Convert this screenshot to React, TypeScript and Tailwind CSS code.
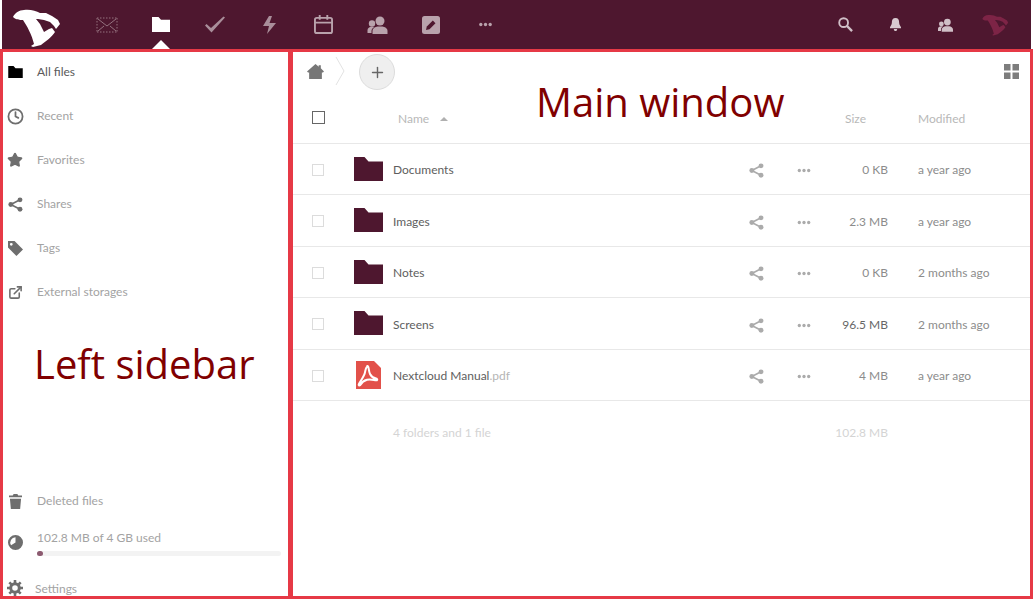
import type { ReactNode } from "react";
import { Plus, Clock, Star, ExternalLink } from "lucide-react";

const FILES = [
  { name: "Documents", size: "0 KB", modified: "a year ago", dark: false },
  { name: "Images", size: "2.3 MB", modified: "a year ago", dark: false },
  { name: "Notes", size: "0 KB", modified: "2 months ago", dark: false },
  { name: "Screens", size: "96.5 MB", modified: "2 months ago", dark: true },
];

function ShareIcon({ className }: { className?: string }) {
  return (
    <svg viewBox="0 0 16 16" className={className} fill="currentColor">
      <circle cx="12.8" cy="3" r="2.6" />
      <circle cx="3" cy="8" r="2.6" />
      <circle cx="12.8" cy="13" r="2.6" />
      <path d="M3 8 12.8 3M3 8l9.800 5" stroke="currentColor" strokeWidth="1.7" fill="none" />
    </svg>
  );
}

function Dots({ className }: { className?: string }) {
  return (
    <svg viewBox="0 0 16 6" className={className} fill="currentColor">
      <circle cx="2.4" cy="3" r="2" />
      <circle cx="8" cy="3" r="2" />
      <circle cx="13.6" cy="3" r="2" />
    </svg>
  );
}

function FolderShape({ className }: { className?: string }) {
  return (
    <svg viewBox="0 0 29 24" className={className} fill="currentColor">
      <path d="M0 0h10.500l4 4.500H29V24H0z" />
    </svg>
  );
}

function Logo({ className }: { className?: string }) {
  return (
    <svg viewBox="12 8 50 40" className={className} fill="currentColor">
      <path d="M13 17C15 13 19 10 24 10 30 9 36 11 40 13L46 13 52 16 58 20 60 24 56 29 54 26 50 22 44 20 38 19 36 19 40 24 44 32 49 29 52 28 55 32C52 37 46 41 41 45L33 47 31 46 34 44C32 35 27 26 23 20 20 20 16 20 13 17Z" />
    </svg>
  );
}

function PdfIcon({ className }: { className?: string }) {
  return (
    <svg viewBox="0 0 25 28" className={className}>
      <path d="M0 0h18l7 7v21H0z" fill="#e2514a" />
      <path d="M11.500 5c1.500 0 1 5 2.500 8 1.500 3 3 4 6 4.500 2 .5 1.500 2.300-1 1.700-3-.7-5-1.300-8-.5-3 .8-5 2-6.500 5-1 1.500-2.500.5-1.500-1 2-3 4-6 5.500-9.500 1-3 1-7.500 3-7.500z" fill="none" stroke="#fff" strokeWidth="2" />
    </svg>
  );
}

function PeopleIcon({ className }: { className?: string }) {
  return (
    <svg viewBox="0 0 20 18" className={className} fill="currentColor">
      <circle cx="12.500" cy="5" r="4.500" />
      <path d="M5 18v-3c0-3 3-4 5-4.500h5c2 .5 5 1.500 5 4.500v3z" />
      <circle cx="4.500" cy="7.500" r="3.200" />
      <path d="M0 17v-3c0-2 2-3 4-3.300l3 .3c-2 1-3 2-3 4v2z" />
    </svg>
  );
}

function GearIcon({ className }: { className?: string }) {
  return (
    <svg viewBox="0 0 16 16" className={className} fill="none" stroke="currentColor">
      <circle cx="8" cy="8" r="4.300" strokeWidth="3" />
      <path d="M8 0v3M8 13v3M0 8h3M13 8h3M2.300 2.300l2.100 2.100M11.600 11.600l2.100 2.100M13.700 2.300l-2.100 2.100M4.400 11.600l-2.100 2.100" strokeWidth="2.600" />
    </svg>
  );
}

function NavIcon({ children }: { children: ReactNode }) {
  return <div className="relative flex h-full w-[54px] items-center justify-center">{children}</div>;
}

function SideItem({ icon, label, active }: { icon: ReactNode; label: string; active?: boolean }) {
  return (
    <div className="flex h-[44px] items-center">
      <div className={`flex w-[24px] justify-center ${active ? "text-black" : "text-[#6e6e6e]"}`}>{icon}</div>
      <span className={`ml-[10px] text-[12px] ${active ? "text-[#5a5a5a]" : "text-[#a3a3a3]"}`}>{label}</span>
    </div>
  );
}

function Row({ icon, name, ext, size, modified, dark }: { icon: ReactNode; name: string; ext?: string; size: string; modified: string; dark?: boolean }) {
  return (
    <div className="flex h-[51.5px] items-center border-b border-[#e8e8e8] text-[12px]">
      <div className="flex w-[50px] justify-center pt-[2px]">
        <div className="h-[12px] w-[12px] border border-[#dcdcdc]" />
      </div>
      <div className="flex w-[40px] justify-end">{icon}</div>
      <div className="ml-[10px] w-[340px] pt-[3px] text-[#5e5e5e]">
        {name}
        {ext && <span className="text-[#b5b5b5]">{ext}</span>}
      </div>
      <div className="flex w-[47px] justify-center pt-[4px] text-[#ababab]"><ShareIcon className="h-[15px] w-[15px]" /></div>
      <div className="flex w-[47px] justify-center pt-[4px] text-[#ababab]"><Dots className="h-[5px] w-[14px]" /></div>
      <div className={`w-[61px] pt-[3px] text-right ${dark ? "text-[#666666]" : "text-[#8c8c8c]"}`}>{size}</div>
      <div className="ml-[30px] pt-[3px] text-[#8c8c8c]">{modified}</div>
    </div>
  );
}

export default function App() {
  return (
    <div className="flex h-[600px] w-[1033px] flex-col overflow-hidden bg-white font-['Lato',sans-serif]">
      {/* top bar */}
      <header className="mx-[2px] flex h-[49px] shrink-0 items-center bg-[#4e172f]">
        <div className="flex h-full w-[78px] items-start pl-[10px] pt-[8px] text-white">
          <Logo className="h-[40px] w-[50px]" />
        </div>
        <NavIcon>
          <svg viewBox="0 0 22 16" className="h-[16px] w-[22px] text-[#94727f]" fill="none" stroke="currentColor">
            <path d="M1 1h20M1 15h20M1 1v14M21 1v14" strokeDasharray="1.500 1.500" />
            <path d="M2 2l9 7 9-7M2 14l6-5M20 14l-6-5" />
          </svg>
        </NavIcon>
        <NavIcon>
          <FolderShape className="h-[15px] w-[18px] text-white" />
          <div className="absolute bottom-0 left-1/2 h-0 w-0 -translate-x-1/2 border-x-[9px] border-b-[9px] border-x-transparent border-b-white" />
        </NavIcon>
        <NavIcon>
          <svg viewBox="0 0 20 16" className="h-[17px] w-[20px] text-[#a98e9a]" fill="currentColor">
            <path d="M0 9l1.500-1.500L6 11.500 18.500 0 20 1 6.500 16z" />
          </svg>
        </NavIcon>
        <NavIcon>
          <svg viewBox="0 0 14 18" className="h-[18px] w-[14px] text-[#a98e9a]" fill="currentColor">
            <path d="M7 0h3L7.500 7H14L5 18l2-8H1z" />
          </svg>
        </NavIcon>
        <NavIcon>
          <svg viewBox="0 0 20 20" className="h-[19px] w-[19px] text-[#b9a2ac]" fill="none" stroke="currentColor" strokeWidth="2">
            <rect x="1" y="3" width="18" height="16" rx="2" />
            <path d="M1 8h18M6 0v5M14 0v5" />
          </svg>
        </NavIcon>
        <NavIcon><PeopleIcon className="h-[18px] w-[21px] text-[#b9a2ac]" /></NavIcon>
        <NavIcon>
          <svg viewBox="0 0 18 18" className="h-[18px] w-[18px]">
            <rect width="18" height="18" rx="2.500" fill="#b9a2ac" />
            <path d="M4 14l.8-3.500 6-6 2.700 2.700-6 6z" fill="#4e172f" />
          </svg>
        </NavIcon>
        <NavIcon><Dots className="h-[5px] w-[15px] text-[#b9a2ac]" /></NavIcon>
        <div className="ml-auto flex h-full items-center pr-[11px]">
          <div className="flex w-[50px] justify-center">
            <svg viewBox="0 0 16 16" className="h-[15px] w-[15px] text-[#d0bfc7]" fill="none" stroke="currentColor">
              <circle cx="6" cy="6" r="4.700" strokeWidth="2" />
              <path d="M9.500 9.500 15 15" strokeWidth="2.500" />
            </svg>
          </div>
          <div className="flex w-[50px] justify-center">
            <svg viewBox="0 0 12 14" className="h-[13px] w-[11px] text-[#d8cad0]" fill="currentColor">
              <path d="M6 0c3 0 4 2 4 5 0 2 1 3 2 5v1H0v-1c1-2 2-3 2-5 0-3 1-5 4-5zM4 12h4l-1 2H5z" />
            </svg>
          </div>
          <div className="flex w-[50px] justify-center"><PeopleIcon className="h-[14px] w-[15px] text-[#d0bfc7]" /></div>
          <div className="flex w-[50px] justify-center"><Logo className="h-[22px] w-[31px] text-[#7d2446]" /></div>
        </div>
      </header>

      <div className="flex min-h-0 flex-1">
        {/* sidebar */}
        <aside className="relative flex h-[550px] w-[291px] shrink-0 flex-col border-[3px] border-[#e63946]">
          <div className="-mt-[2px]">
            <SideItem active icon={<FolderShape className="h-[12px] w-[15px]" />} label="All files" />
            <SideItem icon={<Clock className="h-[17px] w-[17px]" strokeWidth={2.5} />} label="Recent" />
            <SideItem icon={<Star className="h-[16px] w-[16px] fill-[#6e6e6e]" />} label="Favorites" />
            <SideItem icon={<ShareIcon className="h-[15px] w-[15px]" />} label="Shares" />
            <SideItem
              icon={
                <svg viewBox="0 0 16 16" className="h-[15px] w-[15px]" fill="currentColor">
                  <path fillRule="evenodd" d="M0 0h7l9 9-7 7-9-9zm3.500 2a1.500 1.500 0 1 0 0 3 1.500 1.500 0 0 0 0-3z" />
                </svg>
              }
              label="Tags"
            />
            <SideItem icon={<ExternalLink className="h-[15px] w-[15px]" strokeWidth={2.5} />} label="External storages" />
          </div>
          <div className="mt-auto">
            <SideItem
              icon={
                <svg viewBox="0 0 14 16" className="h-[15px] w-[13px]" fill="currentColor">
                  <path d="M5 0h4l1 1.500h4v2H0v-2h4zM1 5h12l-1 11H2z" />
                </svg>
              }
              label="Deleted files"
            />
            <div className="mt-[2px] flex h-[35px] items-center">
              <div className="flex w-[24px] justify-center">
                <svg viewBox="0 0 16 16" className="h-[15px] w-[15px] text-[#6e6e6e]" fill="currentColor">
                  <path fillRule="evenodd" d="M8 0a8 8 0 1 1 0 16A8 8 0 0 1 8 0zm0 2.500A5.500 5.500 0 0 0 3.200 10.800L8 8z" />
                </svg>
              </div>
              <div className="ml-[10px] w-[244px]">
                <div className="text-[12px] leading-[16px] text-[#a3a3a3]">102.8 MB of 4 GB used</div>
                <div className="mt-[5px] h-[5px] w-full rounded-full bg-[#f3f3f3]">
                  <div className="h-[5px] w-[6px] rounded-full bg-[#8c5a70]" />
                </div>
              </div>
            </div>
            <div className="mt-[20px] flex h-[16px] items-center">
              <div className="flex w-[24px] justify-center text-[#6e6e6e]"><GearIcon className="h-[16px] w-[16px]" /></div>
              <span className="ml-[8px] pt-[2px] text-[12px] text-[#a3a3a3]">Settings</span>
            </div>
          </div>
          <div className="pointer-events-none absolute left-[31px] top-[292px] font-['Open_Sans',sans-serif] text-[40px] leading-none text-[#800000]">Left sidebar</div>
        </aside>

        {/* main */}
        <main className="relative h-[550px] flex-1 border-y-[3px] border-r-[3px] border-l-[2px] border-[#e63946]">
          <div className="flex h-[38px] items-center">
            <svg viewBox="0 0 16 14" className="ml-[14px] h-[15px] w-[17px] text-[#777777]" fill="currentColor">
              <path d="M8 0l3 2.500V1h2v3l3 3-1 1h-1v6H2V8H1L0 7z" />
            </svg>
            <svg viewBox="0 0 10 30" className="ml-[11px] h-[30px] w-[10px] text-[#e3e3e3]" fill="none" stroke="currentColor"><path d="M1 1l8 14-8 14" /></svg>
            <div className="ml-[14px] mt-[2px] flex h-[36px] w-[36px] items-center justify-center rounded-full border border-[#dcdcdc] bg-[#efefef]">
              <Plus className="h-[17px] w-[17px] text-[#666666]" strokeWidth={2} />
            </div>
            <svg viewBox="0 0 15 15" className="ml-auto mr-[11px] h-[15px] w-[15px] text-[#7d7d7d]" fill="currentColor">
              <path d="M0 0h6.500v6.500H0zM8.500 0H15v6.500H8.500zM0 8.500h6.500V15H0zM8.500 8.500H15V15H8.500z" />
            </svg>
          </div>
          <div className="flex h-[53.5px] items-center border-b border-[#e8e8e8] text-[12px] text-[#b8b8b8]">
            <div className="flex w-[50px] justify-center pt-[2px]">
              <div className="h-[13px] w-[13px] border border-[#666666]" />
            </div>
            <div className="ml-[55px] flex w-[399px] items-center pt-[6px]">
              Name
              <div className="ml-[11px] h-0 w-0 border-x-[4px] border-b-[4px] border-x-transparent border-b-[#b0b0b0]" />
            </div>
            <div className="ml-[48px] w-[73px] pt-[6px]">Size</div>
            <div className="pt-[6px]">Modified</div>
          </div>
          {FILES.map((f) => (
            <Row key={f.name} icon={<FolderShape className="h-[24px] w-[29px] text-[#4e172f]" />} name={f.name} size={f.size} modified={f.modified} dark={f.dark} />
          ))}
          <Row icon={<PdfIcon className="mr-[2px] h-[28px] w-[25px]" />} name="Nextcloud Manual" ext=".pdf" size="4 MB" modified="a year ago" />
          <div className="flex h-[62px] items-center pt-[2px] text-[12px] text-[#d4d4d4]">
            <div className="ml-[100px] w-[398px]">4 folders and 1 file</div>
            <div className="w-[97px] text-right">102.8 MB</div>
          </div>
          <div className="pointer-events-none absolute left-[243px] top-[30px] font-['Open_Sans',sans-serif] text-[40px] leading-none text-[#800000]">Main window</div>
        </main>
      </div>
    </div>
  );
}
